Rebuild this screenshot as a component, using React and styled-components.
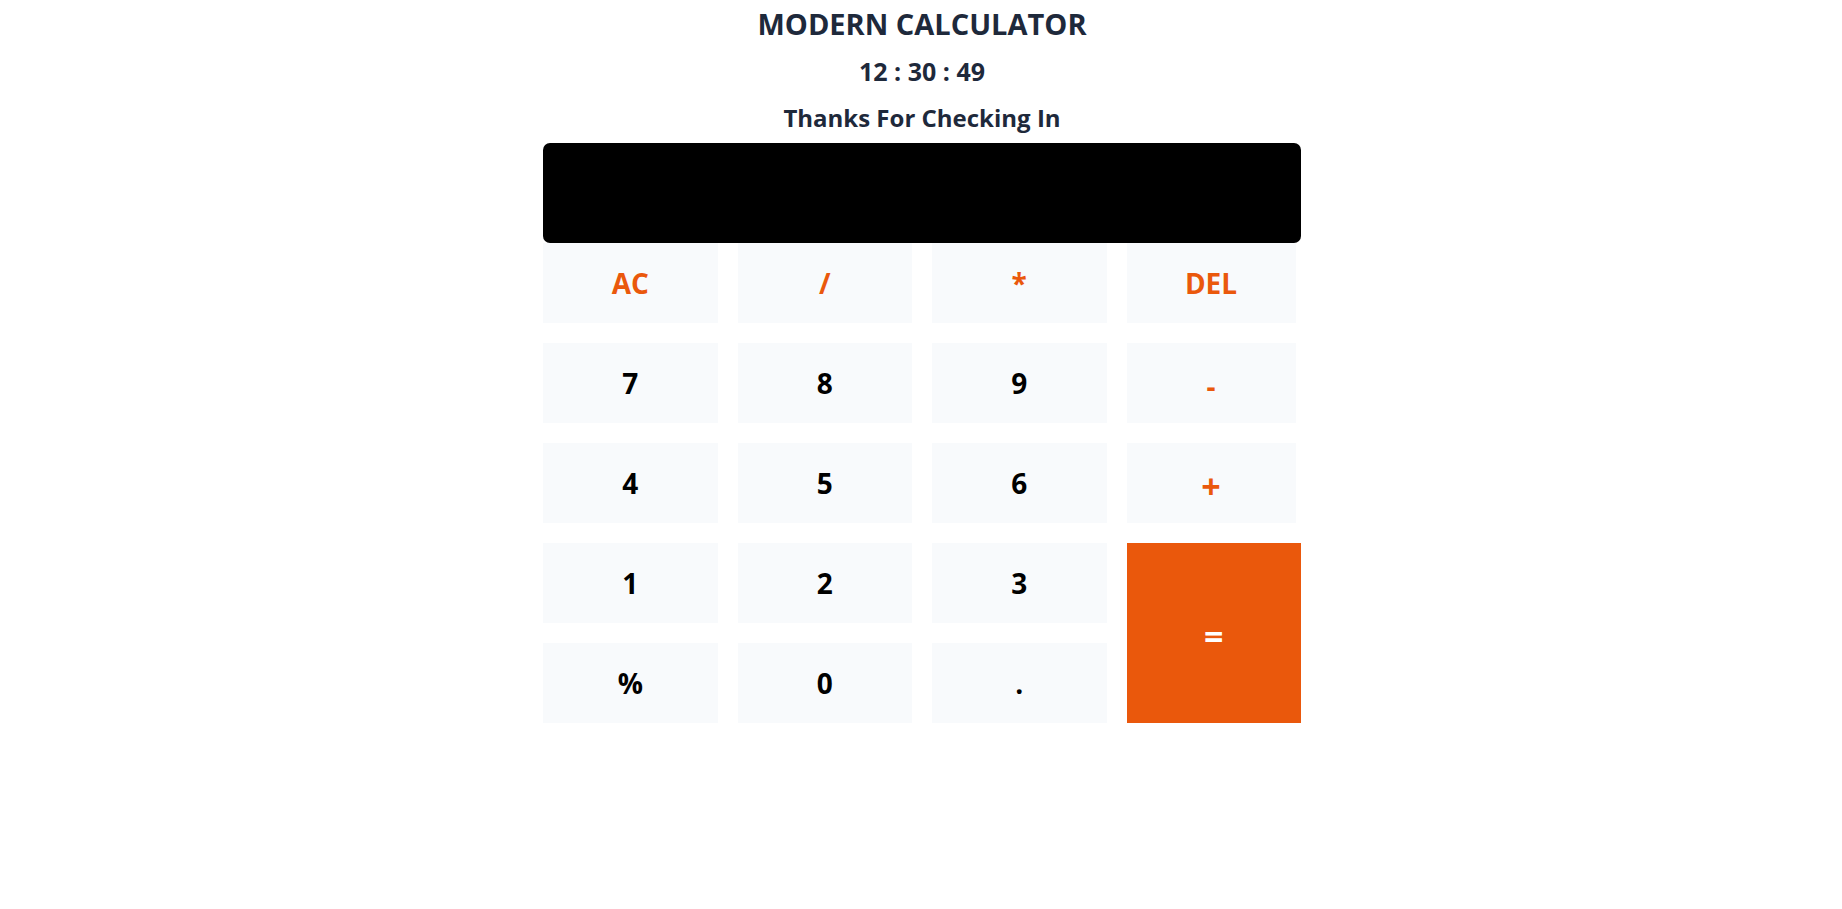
import React from "react";
import styled, { createGlobalStyle } from "styled-components";

const GlobalStyle = createGlobalStyle`
  html, body {
    margin: 0;
    padding: 0;
    background: #ffffff;
  }
  body {
    font-family: "Open Sans", "Noto Sans", "Liberation Sans", sans-serif;
  }
  * { box-sizing: border-box; }
`;

const Page = styled.main`
  display: flex;
  flex-direction: column;
  align-items: center;
  width: 100%;
  min-height: 909px;
  padding-left: 2px;
`;

const Title = styled.h1`
  margin: 0;
  font-size: 29px;
  line-height: 47px;
  font-weight: 700;
  color: #1e293b;
  text-align: center;
`;

const SubLine = styled.h2`
  margin: ${(p) => p.$top} 0 0;
  font-size: ${(p) => p.$size};
  line-height: 46px;
  font-weight: 700;
  color: #1e293b;
  text-align: center;
`;

const Calculator = styled.section`
  width: 758px;
  margin-top: 2px;
  display: flex;
  flex-direction: column;
`;

const Display = styled.div`
  height: 100px;
  background: #000000;
  border-radius: 7px;
`;

const Keypad = styled.div`
  display: grid;
  grid-template-columns: repeat(4, 1fr);
  grid-auto-rows: 80px;
  column-gap: 20px;
  row-gap: 20px;
`;

const Key = styled.button`
  border: none;
  margin: 0;
  padding: ${(p) => (p.$sym ? "6px 0 0" : "0")};
  font-family: inherit;
  font-size: ${(p) => (p.$big ? "34px" : "28px")};
  font-weight: 700;
  cursor: pointer;
  display: flex;
  align-items: center;
  justify-content: center;
  background: ${(p) => (p.$accent ? "#ea580c" : "#f8fafc")};
  color: ${(p) => (p.$accent ? "#ffffff" : p.$op ? "#ea580c" : "#000000")};
  width: ${(p) => (p.$narrow ? "169px" : "100%")};
  grid-row: ${(p) => (p.$tall ? "span 2" : "auto")};
`;

const keys = [
  { label: "AC", op: true },
  { label: "/", op: true },
  { label: "*", op: true },
  { label: "DEL", op: true, narrow: true },
  { label: "7" },
  { label: "8" },
  { label: "9" },
  { label: "-", op: true, narrow: true, sym: true },
  { label: "4" },
  { label: "5" },
  { label: "6" },
  { label: "+", op: true, narrow: true, sym: true, big: true },
  { label: "1" },
  { label: "2" },
  { label: "3" },
  { label: "=", accent: true, tall: true, sym: true, big: true },
  { label: "%" },
  { label: "0" },
  { label: "." },
];

export default function App() {
  return (
    <>
      <GlobalStyle />
      <Page>
        <Title>MODERN CALCULATOR</Title>
        <SubLine $size="25px" $top="1px">12 : 30 : 49</SubLine>
        <SubLine $size="24px" $top="1px">Thanks For Checking In</SubLine>
        <Calculator>
          <Display />
          <Keypad>
            {keys.map((k) => (
              <Key
                key={k.label}
                $op={k.op}
                $accent={k.accent}
                $narrow={k.narrow}
                $tall={k.tall}
                $sym={k.sym}
                $big={k.big}
              >
                {k.label}
              </Key>
            ))}
          </Keypad>
        </Calculator>
      </Page>
    </>
  );
}
